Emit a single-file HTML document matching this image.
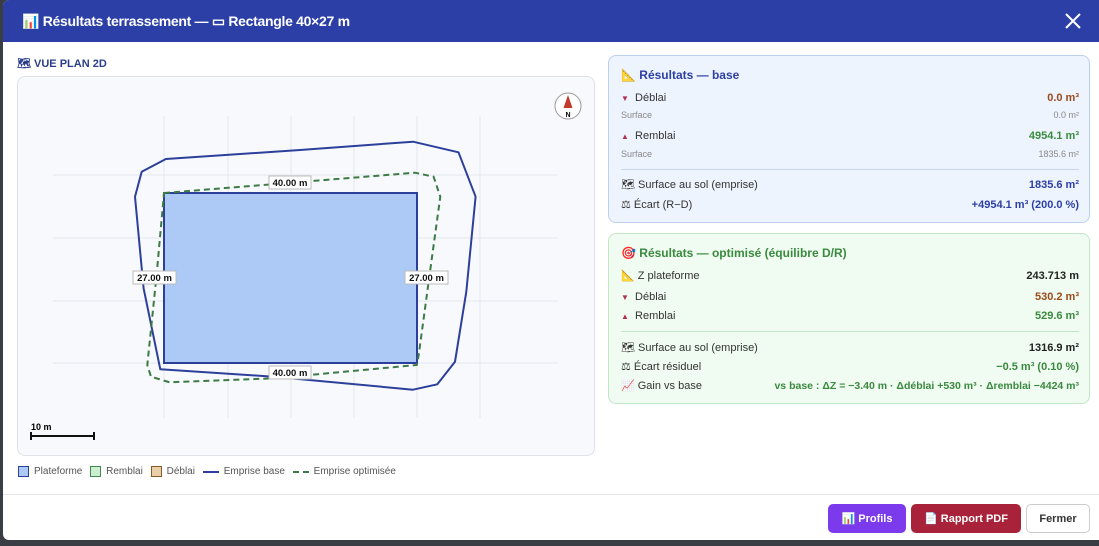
<!DOCTYPE html>
<html><head><meta charset="utf-8"><style>
*{box-sizing:border-box;margin:0;padding:0}
body{width:1099px;height:546px;background:#3a3d44;font-family:"Liberation Sans",sans-serif;position:relative;overflow:hidden}
.modal{position:absolute;left:3px;top:0;width:1096px;height:540px;background:#fff;border-radius:6px 0 0 6px;overflow:hidden}
.hdr{height:42px;background:#2c3fa6;color:#fff;font-weight:bold;font-size:14px;padding:13px 0 0 19px;letter-spacing:-0.3px}
.sec{position:absolute;left:14px;top:57px;font-size:11px;font-weight:bold;color:#2b3e8c}
.map{position:absolute;left:14px;top:76px;width:578px;height:380px;background:#f7f9fc;border:1px solid #dde2ea;border-radius:8px}
.legend{position:absolute;left:15px;top:466px;font-size:10px;color:#555;display:flex;align-items:center;gap:5px}
.sw{display:inline-block;width:11px;height:11px;border:1px solid}
.card{position:absolute;left:605px;width:482px;border-radius:8px;padding:0 10px 0 12px;font-size:11px}
.c1{top:55px;height:168px;background:#eef4fd;border:1px solid #bcd0f0}
.c2{top:233px;height:171px;background:#f0fbf1;border:1px solid #c3e6c7}
.row{display:flex;justify-content:space-between;align-items:center;color:#333;position:absolute;left:12px;right:10px}
.ttl{position:absolute;left:12px;font-weight:bold;font-size:12px}
.sub{font-size:9px;color:#888}
.b{font-weight:bold}
.hr{position:absolute;left:12px;right:10px;height:1px}
.foot{position:absolute;left:0;right:0;top:494px;border-top:1px solid #e3e6ea}
.btn{position:absolute;top:504px;height:29px;border-radius:5px;font-size:11px;font-weight:bold;display:flex;align-items:center;justify-content:center}
</style></head><body>
<div class="modal">
<div class="hdr">📊 Résultats terrassement — ▭ Rectangle 40×27 m</div>
<svg style="position:absolute;left:1061px;top:12px" width="18" height="18" viewBox="0 0 18 18"><path d="M2 2L16 16M16 2L2 16" stroke="#fff" stroke-width="2"/></svg>
<div class="sec">🗺 VUE PLAN 2D</div>
<div class="map"></div>
<svg style="position:absolute;left:-3px;top:0" width="600" height="460" viewBox="0 0 600 460">
<g stroke="#e3e7ee" stroke-width="1">
<line x1="164" y1="116" x2="164" y2="418"/><line x1="228" y1="116" x2="228" y2="418"/><line x1="291" y1="116" x2="291" y2="418"/><line x1="354" y1="116" x2="354" y2="418"/><line x1="417" y1="116" x2="417" y2="418"/><line x1="480" y1="116" x2="480" y2="418"/>
<line x1="53" y1="175" x2="558" y2="175"/><line x1="53" y1="238" x2="558" y2="238"/><line x1="53" y1="301" x2="558" y2="301"/><line x1="53" y1="363" x2="558" y2="363"/>
</g>
<rect x="164" y="193" width="253" height="170" fill="#adc9f5" stroke="#2c3f9a" stroke-width="2"/>
<polygon points="141.7,171.7 165.9,159 300,150 413,141.7 458.5,152.3 475.6,196.7 466.3,291.7 455,361.7 437.3,384.3 413,389.7 273.7,376.7 160.3,369.3 143.6,288.3 135,196.7" fill="none" stroke="#2c3f9a" stroke-width="2" stroke-linejoin="round"/>
<polygon points="164,193 415,172.7 433.6,176.7 440.3,196.7 430,271.7 418.7,355 416.8,365 273.7,378.3 169.6,382.3 151,376.7 147.3,365 156.6,275" fill="none" stroke="#3d7a45" stroke-width="2" stroke-dasharray="6,4"/>
<g font-size="9.5" font-weight="bold" fill="#111" text-anchor="middle" font-family="Liberation Sans">
<rect x="269" y="176" width="42" height="13" fill="#fff" stroke="#bbb"/><text x="290" y="186">40.00 m</text>
<rect x="269" y="366" width="42" height="13" fill="#fff" stroke="#bbb"/><text x="290" y="376">40.00 m</text>
<rect x="133" y="271" width="43" height="13" fill="#fff" stroke="#bbb"/><text x="154.5" y="281">27.00 m</text>
<rect x="405" y="271" width="43" height="13" fill="#fff" stroke="#bbb"/><text x="426.5" y="281">27.00 m</text>
</g>
<circle cx="568" cy="106" r="13" fill="#fff" stroke="#999"/>
<polygon points="568,95 563.5,108 572.5,108" fill="#c0392b"/>
<text x="568" y="117" font-size="7" font-weight="bold" text-anchor="middle" font-family="Liberation Sans">N</text>
<text x="31" y="430" font-size="9" font-weight="bold" font-family="Liberation Sans">10 m</text>
<path d="M31 436H94M31 432V440M94 432V440" stroke="#111" stroke-width="2"/>
</svg>
<div class="legend"><span class="sw" style="background:#adc9f5;border-color:#2c3f9a"></span>Plateforme&nbsp;<span class="sw" style="background:#cdeed3;border-color:#3d8a4a"></span>Remblai&nbsp;<span class="sw" style="background:#e8cfa8;border-color:#8a5a2a"></span>Déblai&nbsp;<span style="display:inline-block;width:16px;height:2px;background:#2c3f9a"></span>Emprise base&nbsp;<span style="display:inline-block;width:16px;border-top:2px dashed #3d7a45"></span>Emprise optimisée</div>

<div class="card c1">
<div class="ttl" style="top:12px;color:#2c3fa6">📐 Résultats — base</div>
<div class="row" style="top:36px"><span><span style="color:#b03050;font-size:8px">▼</span>&nbsp; Déblai</span><span class="b" style="color:#9a4a1a">0.0 m³</span></div>
<div class="row sub" style="top:54px"><span>Surface</span><span>0.0 m²</span></div>
<div class="row" style="top:74px"><span><span style="color:#b03050;font-size:8px">▲</span>&nbsp; Remblai</span><span class="b" style="color:#3a8a3f">4954.1 m³</span></div>
<div class="row sub" style="top:93px"><span>Surface</span><span>1835.6 m²</span></div>
<div class="hr" style="top:113px;background:#c8d6ee"></div>
<div class="row" style="top:122px"><span>🗺 Surface au sol (emprise)</span><span class="b" style="color:#2c3fa6">1835.6 m²</span></div>
<div class="row" style="top:142px"><span>⚖ Écart (R−D)</span><span class="b" style="color:#2c3fa6">+4954.1 m³ (200.0 %)</span></div>
</div>

<div class="card c2">
<div class="ttl" style="top:12px;color:#3a8a3f">🎯 Résultats — optimisé (équilibre D/R)</div>
<div class="row" style="top:35px"><span>📐 Z plateforme</span><span class="b" style="color:#222">243.713 m</span></div>
<div class="row" style="top:57px"><span><span style="color:#b03050;font-size:8px">▼</span>&nbsp; Déblai</span><span class="b" style="color:#9a4a1a">530.2 m³</span></div>
<div class="row" style="top:76px"><span><span style="color:#b03050;font-size:8px">▲</span>&nbsp; Remblai</span><span class="b" style="color:#3a8a3f">529.6 m³</span></div>
<div class="hr" style="top:97px;background:#c3e6c7"></div>
<div class="row" style="top:107px"><span>🗺 Surface au sol (emprise)</span><span class="b" style="color:#222">1316.9 m²</span></div>
<div class="row" style="top:126px"><span>⚖ Écart résiduel</span><span class="b" style="color:#3a8a3f">−0.5 m³ (0.10 %)</span></div>
<div class="row" style="top:145px"><span>📈 Gain vs base</span><span class="b" style="color:#3a8a3f;font-size:10.5px">vs base : ΔZ = −3.40 m · Δdéblai +530 m³ · Δremblai −4424 m³</span></div>
</div>

<div class="foot"></div>
<div class="btn" style="left:825px;width:78px;background:#7c3aed;color:#fff">📊 Profils</div>
<div class="btn" style="left:908px;width:110px;background:#a8233a;color:#fff">📄 Rapport PDF</div>
<div class="btn" style="left:1023px;width:64px;background:#fff;color:#333;border:1px solid #ccc">Fermer</div>
</div>
</body></html>
